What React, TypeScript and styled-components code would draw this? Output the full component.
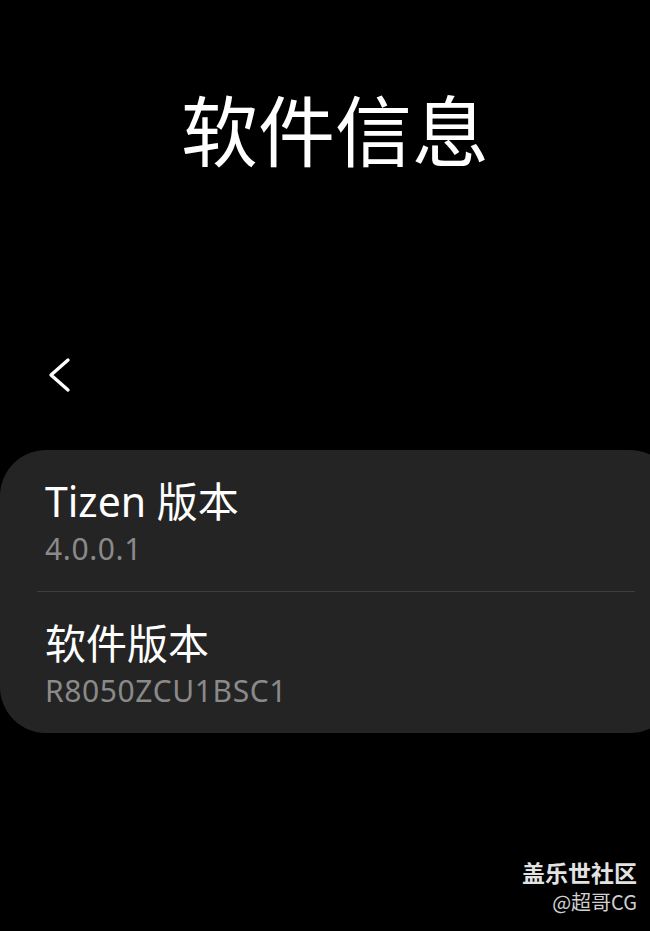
import React from "react";
import styled, { createGlobalStyle } from "styled-components";

const GlobalStyle = createGlobalStyle`
  html, body {
    margin: 0;
    padding: 0;
    background: #000;
    overflow-x: hidden;
  }
  body {
    font-family: "Noto Sans", "Noto Sans CJK SC", sans-serif;
    color: #fff;
  }
`;

const Page = styled.div`
  display: flex;
  flex-direction: column;
  min-height: 931px;
  padding-top: 88px;
  box-sizing: border-box;
  background: #000;
`;

const Title = styled.h1`
  margin: 0;
  padding-left: 20px;
  font-family: "Noto Sans CJK SC", sans-serif;
  font-weight: 400;
  font-size: 77px;
  line-height: 80px;
  text-align: center;
  color: #fff;
`;

const BackButton = styled.button`
  display: flex;
  align-items: center;
  margin: 187px 0 0 46px;
  padding: 0;
  width: 30px;
  height: 40px;
  background: none;
  border: none;
  cursor: pointer;
`;

const Card = styled.section`
  margin-top: 55px;
  width: calc(100% + 26px);
  background: #242424;
  border-radius: 46px;
  display: flex;
  flex-direction: column;
`;

const Item = styled.div`
  display: flex;
  flex-direction: column;
  gap: 6px;
  padding: 27px 20px 24px 45px;
`;

const ItemTitle = styled.div`
  font-size: 41px;
  line-height: 48px;
  color: #fff;
`;

const ItemValue = styled.div`
  font-size: 30px;
  line-height: 36px;
  letter-spacing: 0.6px;
  color: #8a8a8a;
`;

const Divider = styled.div`
  height: 1px;
  margin: 0 41px 0 37px;
  background: #3e3e3e;
`;

const Watermark = styled.div`
  margin-top: 126px;
  padding-right: 13px;
  display: flex;
  flex-direction: column;
  align-items: flex-end;
  font-family: "Noto Sans CJK SC", sans-serif;
`;

const WatermarkBrand = styled.div`
  font-size: 23px;
  line-height: 26px;
  font-weight: 700;
  color: #e2e2e2;
`;

const WatermarkAuthor = styled.div`
  margin-top: 6px;
  font-size: 20px;
  line-height: 22px;
  color: #d0d0d0;
`;

const ChevronLeft = () => (
  <svg width="30" height="40" viewBox="0 0 30 40" fill="none">
    <path
      d="M22 5 L5 20 L22 35"
      stroke="#fff"
      strokeWidth="3.4"
      strokeLinecap="round"
      strokeLinejoin="round"
    />
  </svg>
);

const items = [
  { title: "Tizen 版本", value: "4.0.0.1" },
  { title: "软件版本", value: "R8050ZCU1BSC1" },
];

export default function App() {
  return (
    <>
      <GlobalStyle />
      <Page>
        <Title>软件信息</Title>
        <BackButton aria-label="返回">
          <ChevronLeft />
        </BackButton>
        <Card>
          {items.map((item, i) => (
            <React.Fragment key={item.title}>
              {i > 0 && <Divider />}
              <Item>
                <ItemTitle>{item.title}</ItemTitle>
                <ItemValue>{item.value}</ItemValue>
              </Item>
            </React.Fragment>
          ))}
        </Card>
        <Watermark>
          <WatermarkBrand>盖乐世社区</WatermarkBrand>
          <WatermarkAuthor>@超哥CG</WatermarkAuthor>
        </Watermark>
      </Page>
    </>
  );
}
